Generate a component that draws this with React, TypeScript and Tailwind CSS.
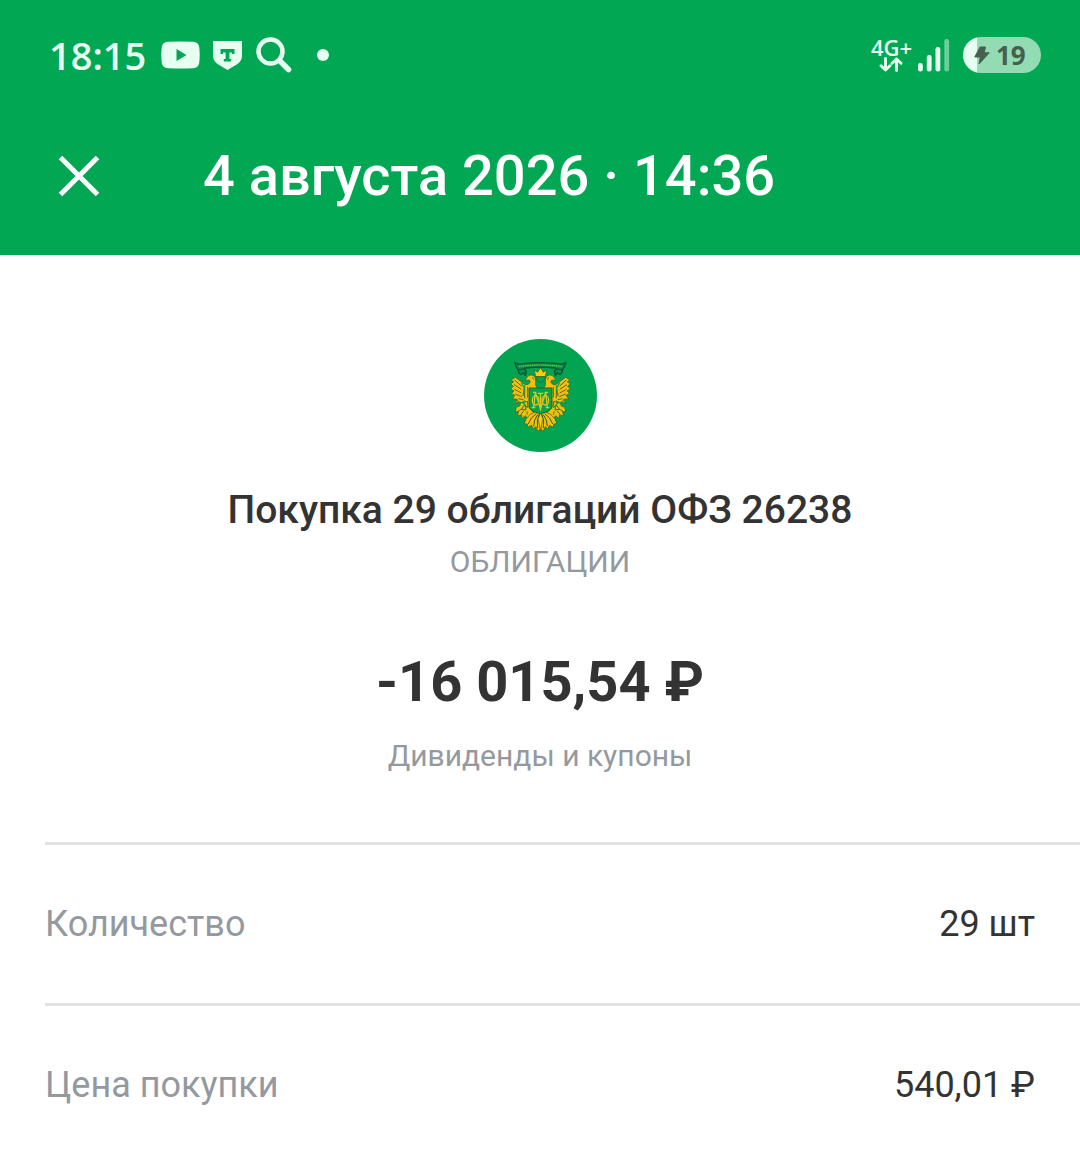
const details = [
  { label: 'Количество', value: '29 шт' },
  { label: 'Цена покупки', value: '540,01 ₽' },
];

function StatusBar() {
  return (
    <div className="flex h-[110px] items-center justify-between pl-[49px] pr-[39px] font-['Open_Sans','Noto_Sans',sans-serif] text-[#e6fff1]">
      <div className="flex items-center">
        <span className="text-[38px] font-semibold leading-none">18:15</span>
        <svg className="ml-[15px] h-7 w-[39px]" viewBox="0 0 39 28" aria-hidden="true">
          <path
            fill="currentColor"
            fillRule="evenodd"
            d="M7 .8Q19.500 0 32 .8Q37.500 1 38.200 6Q39.200 14 38.200 22Q37.500 27 32 27.200Q19.500 28 7 27.200Q1.500 27 .8 22Q-.2 14 .8 6Q1.500 1 7 .8ZM15.500 8V20L25.500 14Z"
          />
        </svg>
        <svg className="ml-[13px] h-[30px] w-[29px]" viewBox="0 0 29 30" aria-hidden="true">
          <path
            fill="currentColor"
            fillRule="evenodd"
            d="M0 1H29V15.500Q29 21 24.500 24L14.500 30L4.500 24Q0 21 0 15.500ZM7.500 9V14H10V12.500H12.600V19H10.800V21.500H18.200V19H16.400V12.500H19V14H21.500V9Z"
          />
        </svg>
        <svg className="ml-[14px] h-9 w-9" viewBox="0 0 36 36" fill="none" stroke="currentColor" aria-hidden="true">
          <circle cx="14.500" cy="14.500" r="12" strokeWidth="4.500" />
          <path d="M23.500 23.500L32.500 32.500" strokeWidth="5.600" strokeLinecap="round" />
        </svg>
        <span className="ml-[25px] size-3 rounded-full bg-current" />
      </div>

      <div className="flex items-center">
        <div className="flex flex-col items-center">
          <span className="text-[22px] font-semibold leading-[19px]">4G+</span>
          <svg className="h-[15px] w-6" viewBox="0 0 24 15" fill="none" stroke="currentColor" strokeWidth="2.900" strokeLinecap="round" strokeLinejoin="round" aria-hidden="true">
            <path d="M6.500 1.500V13M2 8.800L6.500 13L11 8.800M17.500 13.500V2M13 6.200L17.500 2L22 6.200" />
          </svg>
        </div>
        <svg className="ml-1.5 h-[34px] w-8" viewBox="0 0 32 34" fill="currentColor" aria-hidden="true">
          <rect x="0" y="25" width="4.800" height="8.500" rx="2.200" />
          <rect x="8.800" y="17" width="4.800" height="16.500" rx="2.200" />
          <rect x="17.500" y="9" width="4.800" height="24.500" rx="2.200" />
          <rect x="26.300" y="1" width="4.800" height="32.500" rx="2.200" opacity="0.450" />
        </svg>
        <div className="ml-[13px] flex h-9 w-[78px] items-center rounded-full bg-linear-to-r from-[#e6fff1] from-18% to-[#93dcb3] to-18% pl-[11px] text-[#46604f]">
          <svg className="h-[19px] w-4" viewBox="0 0 16 19" fill="currentColor" stroke="currentColor" strokeLinejoin="round" aria-hidden="true">
            <path d="M6 1H11.500L10.200 6.800H15.300L5 18L6.300 11H.8Z" />
          </svg>
          <span className="ml-1.5 text-[26px] font-bold leading-none">19</span>
        </div>
      </div>
    </div>
  );
}

// One side of the eagle; the other side is the same drawing mirrored.
function EagleHalf() {
  return (
    <g stroke="#3d5a1c" strokeWidth="2" strokeLinejoin="round">
      <path d="M186 174Q179 164 182 154Q182 137 170 135Q160 134 156 142L150 152L162 150Q167 152 165 158Q160 165 151 164L136 153L121 142L109 149L116 156L107 161L115 169L107 177L117 183L109 191L120 196L112 206L127 208L121 219L138 217L134 228L124 232L121 246L131 244L127 258L140 254L140 266L151 257L158 266L166 256L178 250L165 235Z" fill="#f0c010" />
      <path d="M171 143L177 148M119 150L139 168M117 164L139 178M118 178L139 189M121 192L140 200M130 206L145 209M149 166L149 205M158 170V203M141 219L157 214L159 232L147 226L140 239L154 239M130 243L140 237M138 253L146 243M157 254L156 244" fill="none" strokeWidth="2.500" />
      <path d="M139 158L148 174L144 198M126 211Q138 224 150 212M145 219Q157 228 150 241" fill="none" stroke="#02a451" strokeWidth="4" />
      <path d="M195 248L182 245L166 253L154 266L147 281L157 282L158 292L170 286L174 297L183 290L188 304L196 298Z" fill="#f0c010" />
      <path d="M184 251Q166 262 160 282M188 254Q176 269 176 289M192 254Q184 273 188 294" fill="none" strokeWidth="3" />
    </g>
  );
}

function Emblem() {
  return (
    <svg className="size-[113px]" viewBox="27 27 339 339" role="img" aria-label="Минфин России">
      <circle cx="196.500" cy="196.500" r="169.500" fill="#02a451" />
      <path
        d="M119 97Q130 106 144 101Q196 95 248 101Q262 106 273 97Q269 111 263 119Q250 119 240 114Q196 109 152 114Q142 119 129 119Q123 111 119 97ZM130 119Q128 127 137 134L145 128L151 137L154 123L146 117M262 119Q264 127 255 134L247 128L241 137L238 123L246 117"
        fill="#04914a"
        stroke="#075635"
        strokeWidth="4"
        strokeLinejoin="round"
      />
      <path d="M132 109Q196 102 261 109" fill="none" stroke="#93b43a" strokeWidth="4" strokeDasharray="4 2 3 2" />
      <EagleHalf />
      <g transform="matrix(-1 0 0 1 393 0)">
        <EagleHalf />
      </g>
      <g stroke="#3d5a1c" strokeWidth="2" strokeLinejoin="round">
        <path d="M182 140L178 120L188 127L196.500 113L205 127L215 120L211 140Z" fill="#f9ce14" />
        <path d="M184 140H209V146Q207 155 196.500 158Q186 155 184 146Z" fill="#02a451" />
        <path d="M162 174H231V230Q231 241 196.500 252Q162 241 162 230Z" fill="#02a451" stroke="#28681f" strokeWidth="3" />
        <path d="M196.500 250L189 266L194 288L196.500 302L199 288L204 266Z" fill="#f9ce14" />
      </g>
      <g fill="none" stroke="#e0c322" strokeWidth="4" strokeLinejoin="round">
        <path d="M176 232L181 187L196.500 237L212 187L217 232M174 187H184M209 187H219M170 233H181M212 233H223M196.500 190V242M188 190H205" />
        <ellipse cx="182" cy="211" rx="10" ry="14" />
        <ellipse cx="211" cy="211" rx="10" ry="14" />
      </g>
    </svg>
  );
}

export default function App() {
  return (
    <div className="min-h-screen bg-white font-[Roboto,'Noto_Sans',sans-serif] text-[#333333]">
      <header className="bg-[#02a753] text-white">
        <StatusBar />
        <div className="flex items-center pb-[43px] pl-[58px] pt-[30px]">
          <button type="button" aria-label="Закрыть" className="flex size-[42px] items-center justify-center">
            <svg className="size-[42px]" viewBox="0 0 42 42" fill="none" stroke="currentColor" strokeWidth="5" aria-hidden="true">
              <path d="M2.500 2.500L39.500 39.500M39.500 2.500L2.500 39.500" />
            </svg>
          </button>
          <h1 className="ml-[103px] text-[56px] font-medium leading-[72px]">4 августа 2026 · 14:36</h1>
        </div>
      </header>

      <main>
        <section className="flex flex-col items-center px-11 pb-16 pt-[84px] text-center">
          <Emblem />
          <h2 className="mt-8 text-[39px] font-medium leading-[52px]">Покупка 29 облигаций ОФЗ 26238</h2>
          <p className="mt-1 text-[30px] leading-[44px] text-[#94999f]">ОБЛИГАЦИИ</p>
          <p className="mt-[62px] text-[56px] font-bold leading-[72px]">-16 015,54 ₽</p>
          <p className="mt-4 text-[30px] leading-[44px] text-[#94999f]">Дивиденды и купоны</p>
        </section>

        <dl className="pl-[45px]">
          {details.map((item) => (
            <div
              key={item.label}
              className="flex items-center justify-between border-t-[3px] border-[#e2e3e5] py-[53px] pr-[45px] text-[36px] leading-[52px]"
            >
              <dt className="text-[#94999f]">{item.label}</dt>
              <dd>{item.value}</dd>
            </div>
          ))}
        </dl>
      </main>
    </div>
  );
}
